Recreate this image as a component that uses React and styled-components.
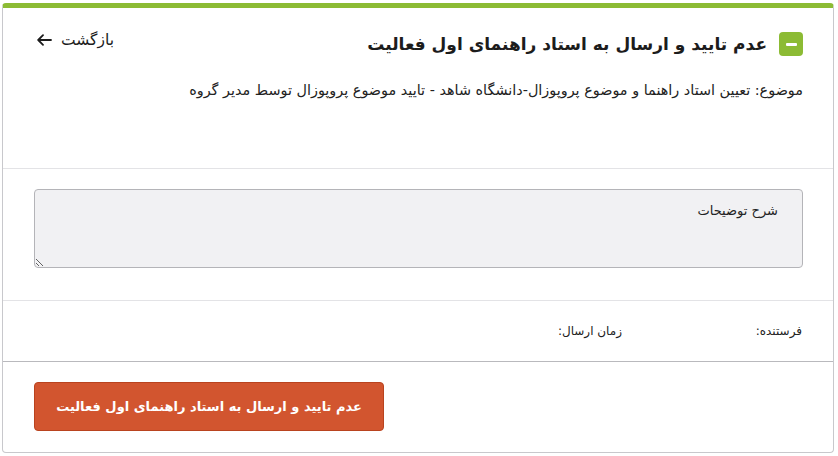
import React from 'react';
import styled, { createGlobalStyle } from 'styled-components';

const GlobalStyle = createGlobalStyle`
  html, body {
    margin: 0;
    padding: 0;
    background: #ffffff;
  }
  body {
    font-family: "DejaVu Sans", "Noto Sans", sans-serif;
    color: #222;
  }
`;

const Card = styled.div`
  direction: rtl;
  margin: 3px 4px 2px 2px;
  border: 1px solid #c8c8cc;
  border-top: 5px solid #8cbb34;
  border-radius: 4px;
  background: #fff;
  height: 450px;
  box-sizing: border-box;
  display: flex;
  flex-direction: column;
  overflow: hidden;

  & > * {
    flex-shrink: 0;
  }
`;

const Header = styled.div`
  padding: 24px 30px 0 34px;
  height: 161px;
  box-sizing: border-box;
  border-bottom: 1px solid #e3e3e6;
`;

const TitleRow = styled.div`
  display: flex;
  align-items: center;
  justify-content: space-between;
`;

const TitleGroup = styled.div`
  display: flex;
  align-items: center;
  gap: 12px;
`;

const CollapseIcon = styled.span`
  width: 24px;
  height: 24px;
  border-radius: 4px;
  background: #8cbb34;
  display: flex;
  align-items: center;
  justify-content: center;

  &::after {
    content: '';
    width: 11px;
    height: 3px;
    border-radius: 1px;
    background: #fff;
  }
`;

const Title = styled.h2`
  margin: 0;
  font-size: 17px;
  font-weight: 700;
  color: #1c1c1c;
`;

const BackLink = styled.a`
  display: flex;
  align-items: center;
  gap: 9px;
  font-size: 15.5px;
  color: #1c1c1c;
  text-decoration: none;
  margin-top: -8px;
`;

const Subject = styled.p`
  margin: 26px 0 0;
  font-size: 14.4px;
  color: #222;
`;

const Body = styled.div`
  padding: 20px 30px 32px 31px;
  border-bottom: 1px solid #e3e3e6;
`;

const Notes = styled.textarea`
  display: block;
  width: 100%;
  height: 79px;
  box-sizing: border-box;
  background: #f1f1f3;
  border: 1px solid #b4b4b8;
  border-radius: 4px;
  padding: 13px 24px;
  font-family: inherit;
  font-size: 13px;
  color: #222;
  resize: vertical;
  direction: rtl;

  &::placeholder {
    color: #222;
  }
`;

const MetaRow = styled.div`
  display: flex;
  padding: 0 31px;
  height: 60px;
  align-items: center;
  border-bottom: 1px solid #b9b9bd;
  font-size: 12px;
  color: #222;
`;

const MetaItem = styled.span`
  width: ${p => p.w}px;
`;

const Footer = styled.div`
  display: flex;
  justify-content: flex-end;
  padding: 20px 31px;
`;

const RejectButton = styled.button`
  width: 350px;
  height: 49px;
  border: 1px solid #b9431f;
  border-radius: 4px;
  background: #d2552f;
  color: #fff;
  font-family: inherit;
  font-size: 13px;
  font-weight: 700;
  cursor: pointer;
  direction: rtl;
`;

const ArrowLeft = () => (
  <svg width="15" height="12" viewBox="0 0 15 12" fill="none" stroke="#1c1c1c" strokeWidth="1.8" strokeLinecap="round" strokeLinejoin="round">
    <path d="M14 6H1.5M6 1.2L1.2 6L6 10.8" />
  </svg>
);

const App = () => {
  const actionLabel = 'عدم تایید و ارسال به استاد راهنمای اول فعالیت';

  return (
    <>
      <GlobalStyle />
      <Card>
        <Header>
          <TitleRow>
            <TitleGroup>
              <CollapseIcon />
              <Title>{actionLabel}</Title>
            </TitleGroup>
            <BackLink href="#">
              بازگشت
              <ArrowLeft />
            </BackLink>
          </TitleRow>
          <Subject>
            موضوع: تعیین استاد راهنما و موضوع پروپوزال-دانشگاه شاهد - تایید موضوع پروپوزال توسط مدیر گروه
          </Subject>
        </Header>

        <Body>
          <Notes placeholder="شرح توضیحات" />
        </Body>

        <MetaRow>
          <MetaItem w={180}>فرستنده:</MetaItem>
          <MetaItem w={200}>زمان ارسال:</MetaItem>
        </MetaRow>

        <Footer>
          <RejectButton>{actionLabel}</RejectButton>
        </Footer>
      </Card>
    </>
  );
};

export default App;
